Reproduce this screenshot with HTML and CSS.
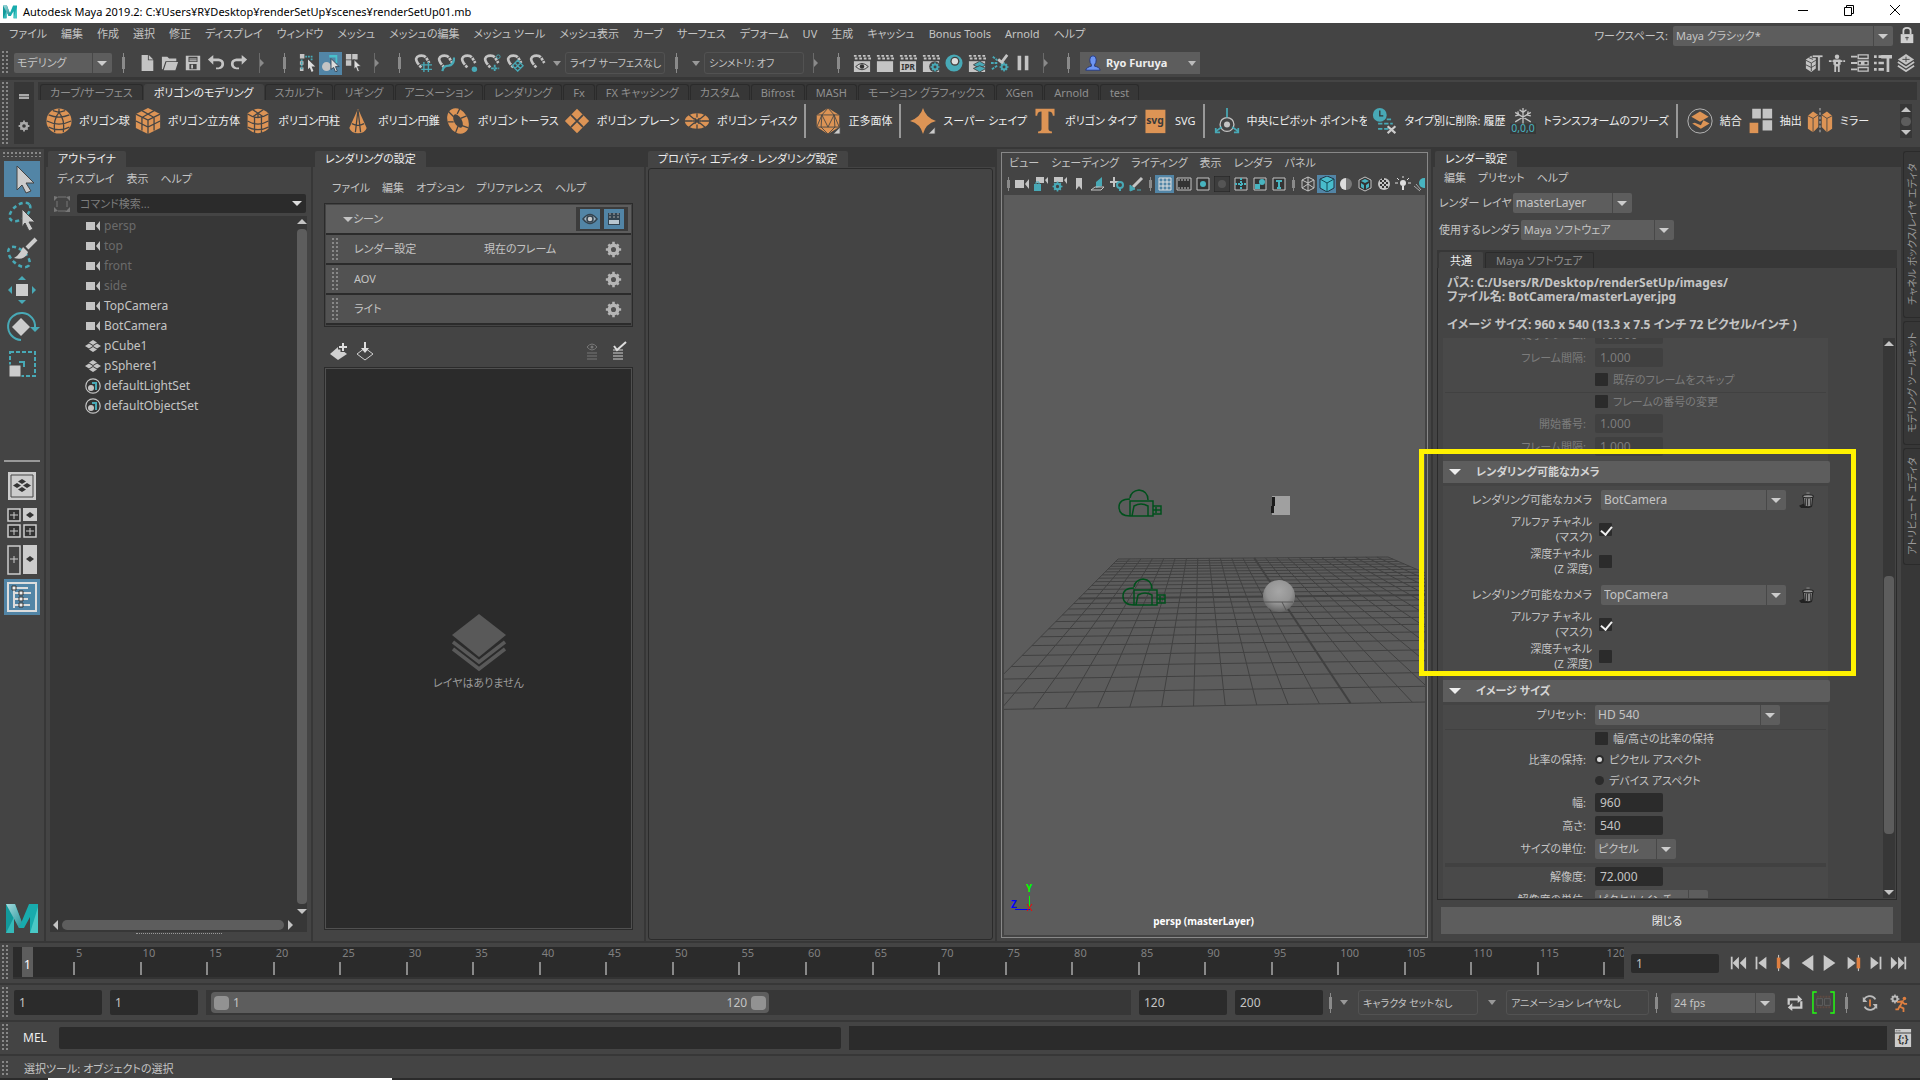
FILE: index.html
```html
<!DOCTYPE html>
<html lang="ja">
<head>
    <meta charset="utf-8" />
    <title>Autodesk Maya 2019.2</title>
    <link rel="stylesheet" href="styles.css">
</head>
<body>
    <!-- icon sprite -->
    <svg class="sprite" width="0" height="0">
        <defs>
            <linearGradient id="teal-a" x1="0" y1="0" x2="1" y2="1"><stop offset="0" stop-color="#a5dcdf"/><stop offset="1" stop-color="#1d8f95"/></linearGradient>
            <radialGradient id="ball" cx="50%" cy="35%" r="65%"><stop offset="0" stop-color="#a6a6a6"/><stop offset=".6" stop-color="#949494"/><stop offset="1" stop-color="#666"/></radialGradient>
        </defs>
        <symbol id="maya" viewBox="0 0 32 30">
            <path d="M0 0h9l9 24h-5L8 13v16H0z" fill="#12999b"/><path d="M0 0h9l9 24h-5z" fill="url(#teal-a)"/>
            <path d="M23 0h9v29h-8V13l-6 11h-5z" fill="#18abad"/><path d="M32 3v26h-8z" fill="#4ac8c6"/><path d="M0 29 8 13v16z" fill="#35b9b9"/>
        </symbol>
        <symbol id="new" viewBox="0 0 20 20"><path d="M4 1h7v6h6v12H4zM12 1l5 5h-5z" fill="#c4c4c4"/></symbol>
        <symbol id="open" viewBox="0 0 20 20"><path d="M1 3h6l2 2h8v3H5L2 17H1zM6 9h13l-3 9H3z" fill="#c4c4c4"/></symbol>
        <symbol id="save" viewBox="0 0 20 20"><path fill-rule="evenodd" d="M2 2h16v16H2zM5 3v6h10V3zM6 11v6h8v-6zM8 12h2v4H8zM6 5h8v1H6zM6 7h8v1H6z" fill="#c4c4c4"/></symbol>
        <symbol id="undo" viewBox="0 0 20 20"><path d="M7 1v4h6q6 1 6 6t-6 6h-3v-2h3q3-1 3-4t-3-3H7v4L1 6z" fill="#c4c4c4"/></symbol>
        <symbol id="redo" viewBox="0 0 20 20"><path d="M13 1v4H7q-6 1-6 6t6 6h3v-2H7q-3-1-3-4t3-3h6v4l6-6z" fill="#c4c4c4"/></symbol>
        <symbol id="sel-h" viewBox="0 0 20 20"><path d="M1 0h5v5H1zM1 8h4v4H1zM1 15h4v4H1z" fill="#c4c4c4"/><path d="M7 3h7v4M3 6v12" stroke="#48a9b6" stroke-width="2" stroke-dasharray="2 1" fill="none"/><path d="M10 6l8 8h-4l2 5-2 1-2-5-2 2z" fill="#ddd"/></symbol>
        <symbol id="sel-o" viewBox="0 0 20 20"><path d="M8 1h9v9h-2V4H8z" fill="#48c0cc"/><circle cx="5" cy="14" r="5" fill="#c4c4c4"/><path d="M10 5l9 9h-4l2 5-2 1-2-5-3 2z" fill="#ddd" stroke="#345"/></symbol>
        <symbol id="sel-c" viewBox="0 0 20 20"><path d="M1 0h6v6H1zM8 0h6v6H8zM1 7h6v6H1z" fill="#c4c4c4"/><path d="M10 6l8 8h-4l2 5-2 1-2-5-2 2z" fill="#ddd" stroke="#444"/></symbol>
        <symbol id="mag" viewBox="0 0 20 20"><path d="M8 15 4 10Q0 4 6 2q6-1 8 3l3 5" fill="none" stroke="#c4c4c4" stroke-width="3" stroke-dasharray="3 1 20 1"/></symbol>
        <symbol id="snap-g" viewBox="0 0 20 20"><use href="#mag"/><path d="M11 9v11M16 9v11M8 12h12M8 17h12" stroke="#48a9b6" stroke-width="1.500"/></symbol>
        <symbol id="snap-c" viewBox="0 0 20 20"><use href="#mag"/><path d="M6 19q1-6 7-6 6-1 6-9" stroke="#48a9b6" stroke-width="2.500" fill="none"/></symbol>
        <symbol id="snap-p" viewBox="0 0 20 20"><use href="#mag"/><circle cx="16" cy="17" r="3" fill="#48a9b6"/></symbol>
        <symbol id="snap-j" viewBox="0 0 20 20"><use href="#mag"/><path d="M13 12v8M9 16h9" stroke="#48a9b6" stroke-width="2" stroke-dasharray="3 1"/><circle cx="17" cy="3" r="2" fill="none" stroke="#48a9b6"/></symbol>
        <symbol id="snap-v" viewBox="0 0 20 20"><use href="#mag"/><path d="M13 7l6 6-6 6-6-6zM10 10l6 6M16 10l-6 6" stroke="#48a9b6" stroke-width="1.500" fill="none"/></symbol>
        <symbol id="clap" viewBox="0 0 20 20"><path d="M1 8h18v12H1z" fill="#c4c4c4"/><path d="M1 2h18M2 5h18" stroke="#c4c4c4" stroke-width="2" stroke-dasharray="3 2"/></symbol>
        <symbol id="clap-eye" viewBox="0 0 20 20"><use href="#clap"/><path d="M3 14q7-7 14 0-7 7-14 0z" fill="#ccc" stroke="#333"/><circle cx="10" cy="14" r="2.500" fill="#333"/></symbol>
        <symbol id="gear" viewBox="0 0 20 20"><circle cx="10" cy="10" r="5" fill="none" stroke="currentColor" stroke-width="4"/><path d="M10 1v3M10 16v3M1 10h3M16 10h3M4 4l2 2M14 14l2 2M16 4l-2 2M6 14l-2 2" stroke="currentColor" stroke-width="3"/></symbol>
        <symbol id="clap-set" viewBox="0 0 20 20"><use href="#clap"/><circle cx="14" cy="14" r="6" fill="#444"/><use href="#gear" x="9" y="9" width="11" height="11" color="#48a9b6"/></symbol>
        <symbol id="hyper" viewBox="0 0 20 20"><circle cx="10" cy="10" r="9.500" fill="#48a9b6"/><circle cx="11" cy="8" r="5" fill="#444"/><circle cx="11" cy="8" r="3.500" fill="#ddd"/></symbol>
        <symbol id="clap-lay" viewBox="0 0 20 20"><use href="#clap"/><path d="M13 8l7 4-7 4-7-4z" fill="#48a9b6" stroke="#444"/><path d="M13 13l7 3-7 4-7-4z" fill="#48a9b6" stroke="#444"/></symbol>
        <symbol id="light-ed" viewBox="0 0 20 20"><path d="M18 1l-6 8M8 6l6 5" stroke="#c4c4c4" stroke-width="3"/><path d="M0 10h7M1 17l6-4M2 3l5 4" stroke="#48a9b6" stroke-width="2" stroke-dasharray="3 1"/><use href="#gear" x="9" y="9" width="11" height="11" color="#48a9b6"/></symbol>
        <symbol id="pause" viewBox="0 0 20 20"><path d="M4 2h4v16H4zM12 2h4v16h-4z" fill="#c4c4c4"/></symbol>
        <symbol id="user" viewBox="0 0 20 20"><path d="M10 1q4 0 4 5 0 4-2 6v2q6 1 7 5H1q1-4 7-5v-2Q6 10 6 6q0-5 4-5z" fill="#6d95f2" stroke="#1b2f7a"/></symbol>
        <symbol id="lock" viewBox="0 0 20 20"><path d="M3 9h14v10H3z" fill="#d0d0d0"/><path d="M6 9V5q0-3 4-3t4 3v4" fill="none" stroke="#d0d0d0" stroke-width="2"/><path d="M10 12v4M8 13h4" stroke="#444"/></symbol>
        <symbol id="cube-ham" viewBox="0 0 20 20"><path d="M1 6l6-4 5 2v12l-5 4-6-4z" fill="#c4c4c4"/><path d="M1 7l6 3v9M7 10l5-3M1 12l6 3 5-3M4 4l5 2" stroke="#444" fill="none"/><path d="M8 1h12v3h-3v15h-3V4H8z" fill="#c4c4c4" stroke="#444"/></symbol>
        <symbol id="man" viewBox="0 0 20 20"><circle cx="10" cy="3" r="2.500" fill="#c4c4c4"/><path d="M1 8h18" stroke="#c4c4c4" stroke-width="2" stroke-dasharray="3 1" fill="none"/><path d="M6 6h8v6h-1v8h-2v-6H9v6H7v-8H6z" fill="#c4c4c4"/><path d="M9 9h2v2H9z" fill="#444"/></symbol>
        <symbol id="attr" viewBox="0 0 20 20"><path d="M0 3h7M0 10h7M0 17h7" stroke="#c4c4c4" stroke-width="2"/><path d="M8 1h11v4H8zM8 8h11v4H8zM8 15h11v4H8z" fill="none" stroke="#c4c4c4" stroke-width="1.500"/><path d="M11 8h4v4h-4z" fill="#c4c4c4"/></symbol>
        <symbol id="tools" viewBox="0 0 20 20"><path d="M0 3h3M5 3h4M0 10h3M5 10h6M0 17h3M5 17h6" stroke="#c4c4c4" stroke-width="3"/><path d="M8 1h12v4h-3v15h-3V5H8z" fill="#c4c4c4"/></symbol>
        <symbol id="layers" viewBox="0 0 20 20"><path d="M10 0l9 6-9 6-9-6z" fill="#c4c4c4"/><path d="M1 9l9 6 9-6M1 13l9 6 9-6" fill="none" stroke="#c4c4c4" stroke-width="2"/><path d="M6 6h8M10 3v6" stroke="#444"/></symbol>

        <symbol id="p-sphere" viewBox="0 0 30 30"><circle cx="15" cy="15" r="14.500" fill="#dd9455"/><path d="M3 8q12 5 24 0M1 15q14 7 28 0M3 22q12 6 24 0M15 1v4M15 5q-7 8-5 23M15 5q7 8 5 23M8 3l7 2 7-2" fill="none" stroke="#444" stroke-width="1.500"/></symbol>
        <symbol id="p-cube" viewBox="0 0 30 30"><path d="M15 0l14 7v16l-14 7-14-7V7z" fill="#dd9455"/><path d="M1 7l14 7 14-7M15 14v16M1 15l14 7 14-7M8 3l14 8v15M22 3L8 11v15" fill="none" stroke="#444" stroke-width="1.500"/></symbol>
        <symbol id="p-cyl" viewBox="0 0 30 30"><path d="M3 6q12-10 24 0v18q-12 10-24 0z" fill="#dd9455"/><path d="M3 7q12 8 24 0M3 15q12 7 24 0M11 10v19M19 10v19M15 6v5M9 2l12 8M21 2L9 10M3 22q12 6 24 0" fill="none" stroke="#444" stroke-width="1.500"/></symbol>
        <symbol id="p-cone" viewBox="0 0 30 30"><path d="M15 1l10 22q-2 6-10 6T5 23z" fill="#dd9455"/><path d="M15 2l-3 26M15 2l3 26M8 18q7 4 14 0" fill="none" stroke="#444" stroke-width="1.500"/></symbol>
        <symbol id="p-torus" viewBox="0 0 30 30"><ellipse cx="15" cy="15" rx="8" ry="12" transform="rotate(-28 15 15)" fill="none" stroke="#dd9455" stroke-width="7"/><path d="M4 4l6 6M3 16l7 0M12 29l3-8M19 20l8 3M18 12l7-3M14 7l3-6" stroke="#444" stroke-width="1.500"/></symbol>
        <symbol id="p-plane" viewBox="0 0 30 30"><path d="M15 1l14 14-14 14L1 15z" fill="#dd9455"/><path d="M8 8l14 14M22 8L8 22" stroke="#444" stroke-width="2"/></symbol>
        <symbol id="p-disc" viewBox="0 0 30 30"><ellipse cx="15" cy="15" rx="14" ry="9" fill="#dd9455"/><path d="M15 6v5M15 19v6M1 15h9M20 15h9M6 8l6 5M24 8l-6 5M6 22l6-5M24 22l-6-5" stroke="#444" stroke-width="1.500"/><path d="M10 15h10M12 12l6 6M18 12l-6 6" stroke="#444" stroke-width="2"/></symbol>
        <symbol id="p-plato" viewBox="0 0 30 30"><path d="M15 0l13 8v14l-13 8-13-8V8z" fill="#dd9455"/><path d="M2 8h26M2 22L8 8l7-8 7 8 6 14M8 8l-1 14h16L22 8M8 8l7 14 7-14M7 22l8 8 8-8M2 22h5M23 22h5" fill="none" stroke="#444"/><path d="M29 22v8h-8z" fill="#ccc" stroke="#444"/></symbol>
        <symbol id="p-super" viewBox="0 0 30 30"><path d="M15 0q3 11 15 15-12 3-15 15Q12 18 0 15 12 11 15 0z" fill="#dd9455"/><path d="M29 22v8h-8z" fill="#ccc" stroke="#444"/></symbol>
        <symbol id="p-type" viewBox="0 0 30 30"><path d="M4 1h22v8h-2q0-5-5-5v20q0 3 4 3v2H7v-2q4 0 4-3V4Q6 4 6 9H4z" fill="#dd9455"/></symbol>
        <symbol id="p-pivot" viewBox="0 0 30 30"><circle cx="15" cy="19" r="8" fill="none" stroke="#c4c4c4" stroke-width="1.500"/><circle cx="15" cy="19" r="3.500" fill="#c4c4c4"/><path d="M15 0v11M9 22l-7 5M21 22l7 5M2 23v5h5M28 23v5h-5" stroke="#48a9b6" stroke-width="2" fill="none"/></symbol>
        <symbol id="p-hist" viewBox="0 0 30 30"><circle cx="9" cy="8" r="8" fill="#48a9b6"/><path d="M9 3v6h4" stroke="#333" stroke-width="1.500" fill="none"/><path d="M17 13h7M7 18h17M7 24h12" stroke="#48a9b6" stroke-width="2" stroke-dasharray="5 2"/><path d="M18 21l9 8M27 21l-9 8" stroke="#ccc" stroke-width="2.500"/></symbol>
        <symbol id="p-comb" viewBox="0 0 30 30"><circle cx="15" cy="15" r="14" fill="none" stroke="#c4c4c4"/><path d="M15 4l10 6-10 6-10-6z" fill="#dd9455"/><path d="M19 14l7 4-10 6-10-6 3-1 7 3z" fill="#dd9455"/></symbol>
        <symbol id="p-extr" viewBox="0 0 30 30"><path d="M6 1h10v11H6zM18 1h11v11H18zM18 14h11v12H18z" fill="#c4c4c4"/><path d="M3 17h10v12H3z" fill="#dd9455"/></symbol>
        <symbol id="p-mirr" viewBox="0 0 30 30"><path d="M1 9l6-5 6 4v14l-6 6-6-4zM17 8l6-4 6 5v15l-6 4-6-6z" fill="#dd9455"/><path d="M1 9l6 3 6-4M7 12v16M17 8l6 4 6-3M23 12v16" stroke="#444" fill="none"/><path d="M15 0v30" stroke="#ccc" stroke-dasharray="3 2"/></symbol>

        <symbol id="t-arrow" viewBox="0 0 36 36"><path d="M13 5l17 17h-8l5 8-5 2-4-8-5 5z" fill="#ccc" stroke="#444"/></symbol>
        <symbol id="t-lasso" viewBox="0 0 36 36"><ellipse cx="16" cy="14" rx="12" ry="7" transform="rotate(-38 16 14)" fill="none" stroke="#48a9b6" stroke-width="2.500" stroke-dasharray="4 3"/><path d="M18 11l13 13h-6l4 7-4 2-4-8-3 4z" fill="#ccc" stroke="#444"/></symbol>
        <symbol id="t-paint" viewBox="0 0 36 36"><ellipse cx="15" cy="22" rx="13" ry="7" transform="rotate(42 15 22)" fill="none" stroke="#48a9b6" stroke-width="2.500" stroke-dasharray="4 3"/><path d="M32 4l-9 9" stroke="#ccc" stroke-width="4"/><path d="M19 12l5 5q-3 9-14 6 5-2 9-11z" fill="#ccc"/></symbol>
        <symbol id="t-move" viewBox="0 0 36 36"><path d="M12 12h12v12H12z" fill="#ccc"/><path d="M18 4l4 4h-8zM18 32l4-4h-8zM4 18l4-4v8zM32 18l-4-4v8z" fill="#48a9b6"/></symbol>
        <symbol id="t-rot" viewBox="0 0 36 36"><path d="M17 31A13.500 13.500 0 1 1 31 19" fill="none" stroke="#48a9b6" stroke-width="2"/><path d="M26 18h10l-5 5z" fill="#48a9b6"/><path d="M17 9l9 9-9 9-9-9z" fill="#ccc"/></symbol>
        <symbol id="t-scale" viewBox="0 0 36 36"><path d="M6 6h25v24H6z" fill="none" stroke="#48a9b6" stroke-width="2" stroke-dasharray="4 2"/><path d="M15 16h5v5" fill="none" stroke="#48a9b6" stroke-width="2"/><path d="M5 19h12v12H5z" fill="#ccc" stroke="#444"/></symbol>
        <symbol id="l-one" viewBox="0 0 36 36"><path d="M4 4h28v28H4z" fill="#ccc"/><path d="M7 7h22v22H7z" fill="none" stroke="#444"/><path d="M18 11l4 2.500-4 2.500-4-2.500zM18 19l4 2.500-4 2.500-4-2.500zM13 15l4 2.500-4 2.500-4-2.500zM23 15l4 2.500-4 2.500-4-2.500z" fill="#333"/></symbol>
        <symbol id="l-four" viewBox="0 0 36 36"><path d="M4 4h12v12H4zM4 20h12v12H4zM20 20h12v12H20z" fill="#333" stroke="#ccc" stroke-width="1.500"/><path d="M19 3h14v13H19z" fill="#ccc"/><path d="M10 7v7M6 10h8M10 23v7M6 26h8M26 23v7M22 26h8" stroke="#ccc"/><path d="M26 7l4 3-4 3-4-3z" fill="#333"/></symbol>
        <symbol id="l-two" viewBox="0 0 36 36"><path d="M4 4h12v28H4z" fill="#444" stroke="#ccc" stroke-width="1.500"/><path d="M19 3h14v29H19z" fill="#ccc"/><path d="M10 14v7M6 17h8" stroke="#ccc"/><path d="M26 14l4 3-4 3-4-3z" fill="#333"/></symbol>
        <symbol id="l-out" viewBox="0 0 36 36"><path d="M4 4h28v28H4z" fill="none" stroke="#ddd" stroke-width="2"/><path d="M10 9v20M10 9h14M10 14h17M10 20h14M10 26h16" stroke="#ddd" stroke-width="2"/><path d="M8 7h4v4H8zM15 12h4v4h-4zM15 18h4v4h-4zM15 24h4v4h-4z" fill="#eee" stroke="#333"/></symbol>

        <symbol id="cam" viewBox="0 0 16 16"><path d="M1 4h9v8H1zM11 8l4-5v10z" fill="#c4c4c4"/></symbol>
        <symbol id="mesh" viewBox="0 0 16 16"><path d="M8 2l4 2.500L8 7 4 4.500zM8 9l4 2.500L8 14l-4-2.500zM4 5.500L8 8l-4 2.500L0 8zM12 5.500L16 8l-4 2.500L8 8z" fill="#c4c4c4"/></symbol>
        <symbol id="set" viewBox="0 0 16 16"><circle cx="8" cy="8" r="7.200" fill="#333" stroke="#c4c4c4" stroke-width="1.200"/><path d="M7 4h5v8h-2V6H7z" fill="#48a9b6"/><circle cx="6" cy="10" r="3" fill="#c4c4c4"/></symbol>
        <symbol id="frame" viewBox="0 0 16 16"><path d="M4 1h8M4 15h8M3 5v6M13 5v6" stroke="#777"/><path d="M0 0l4 1-4 4zM16 0v5l-4-4zM0 16v-5l4 4zM16 16h-5l5-5z" fill="#777"/></symbol>
        <symbol id="eye" viewBox="0 0 20 20"><path d="M3 10q7-9 14 0-7 9-14 0z" fill="#9fb4c2" stroke="#33434f" stroke-width="1.500"/><circle cx="10" cy="10" r="3" fill="#ccc" stroke="#33434f" stroke-width="1.500"/></symbol>
        <symbol id="clap-b" viewBox="0 0 20 20"><path d="M4 4h12v12H4z" fill="#33434f"/><path d="M5 5h11M5 8h11" stroke="#aaa" stroke-dasharray="2 2"/><path d="M5 11h10v4H5z" fill="#b8c6cf"/></symbol>
        <symbol id="lay-add" viewBox="0 0 20 20"><path d="M9 6l9 7-9 6-8-6z" fill="#d0d0d0"/><path d="M14 1v10M9 6h10" stroke="#444" stroke-width="5"/><path d="M14 2v8M10 6h8" stroke="#ddd" stroke-width="2"/></symbol>
        <symbol id="lay-imp" viewBox="0 0 20 20"><path d="M10 7l8 6-8 6-8-6z" fill="none" stroke="#d0d0d0"/><path d="M10 1v7" stroke="#ddd" stroke-width="2"/><path d="M6 7h8l-4 5z" fill="#ddd"/></symbol>
        <symbol id="lst-eye" viewBox="0 0 20 20"><path d="M5 6q5-6 10 0-5 6-10 0zM5 12h10M5 15h10M5 18h10" fill="none" stroke="#777"/><circle cx="10" cy="6" r="1.500" fill="#777"/></symbol>
        <symbol id="lst-chk" viewBox="0 0 20 20"><path d="M5 9h10M5 12h10M5 15h10M5 18h10" stroke="#d0d0d0"/><path d="M6 5l3 4 9-8" fill="none" stroke="#ddd" stroke-width="2"/></symbol>
        <symbol id="stack" viewBox="0 0 54 58"><path d="M27 0l27 21-27 22L0 21z" fill="#595959"/><path d="M1 28l26 20 26-20M1 35l26 20 26-20" fill="none" stroke="#595959" stroke-width="3.500"/></symbol>

        <symbol id="v-lock" viewBox="0 0 16 16"><path d="M3 1h8v6H3zM12 4l3-3v7z" fill="#c4c4c4"/><path d="M1 8h7v7H1z" fill="#48a9b6"/><path d="M3 8V6h3v2" fill="none" stroke="#48a9b6"/></symbol>
        <symbol id="v-camset" viewBox="0 0 16 16"><path d="M2 1h9v5H2zM12 4l3-3v7z" fill="#c4c4c4"/><use href="#gear" x="0" y="5" width="11" height="11" color="#48a9b6"/></symbol>
        <symbol id="v-mark" viewBox="0 0 16 16"><path d="M5 2h6v12l-3-4-3 4z" fill="#c4c4c4"/></symbol>
        <symbol id="v-img" viewBox="0 0 16 16"><path d="M6 12V6l6-5v9z" fill="#48a9b6"/><path d="M1 14l4-3h9l-3 3z" fill="none" stroke="#c4c4c4"/></symbol>
        <symbol id="v-pan" viewBox="0 0 16 16"><path d="M5 1v10M1 6h9" stroke="#c4c4c4" stroke-width="2"/><circle cx="11" cy="9" r="3" fill="none" stroke="#48a9b6" stroke-width="2"/><path d="M11 12v3" stroke="#48a9b6" stroke-width="2"/></symbol>
        <symbol id="v-pen" viewBox="0 0 16 16"><path d="M14 2L5 11" stroke="#c4c4c4" stroke-width="3"/><path d="M2 9l5 4-5 2zM9 14h4" stroke="#48a9b6" fill="#48a9b6"/></symbol>
        <symbol id="v-grid" viewBox="0 0 16 16"><path d="M2 2h12v12H2zM6 2v12M10 2v12M2 6h12M2 10h12" fill="none" stroke="#e0e0e0"/></symbol>
        <symbol id="v-film" viewBox="0 0 16 16"><path d="M1 2h14v12H1z" fill="#333" stroke="#c4c4c4"/><path d="M2 4h12M2 12h12" stroke="#c4c4c4" stroke-dasharray="2 1"/></symbol>
        <symbol id="v-res" viewBox="0 0 16 16"><path d="M2 2h12v12H2z" fill="#333" stroke="#c4c4c4"/><circle cx="8" cy="8" r="3" fill="#48b4c0"/></symbol>
        <symbol id="v-gate" viewBox="0 0 16 16"><path d="M0 0h16v16H0z" fill="#3d3d3d" stroke="#222"/><circle cx="8" cy="8" r="4" fill="#555"/></symbol>
        <symbol id="v-chart" viewBox="0 0 16 16"><path d="M2 2h12v12H2z" fill="#333" stroke="#c4c4c4"/><path d="M8 2v12M2 8h12" stroke="#48b4c0" stroke-width="2" stroke-dasharray="2 1"/></symbol>
        <symbol id="v-safe" viewBox="0 0 16 16"><path d="M2 2h12v12H2z" fill="#333" stroke="#c4c4c4"/><path d="M3 8h5v5H3z" fill="#48b4c0"/><circle cx="10" cy="6" r="3" fill="#48b4c0"/></symbol>
        <symbol id="v-title" viewBox="0 0 16 16"><path d="M2 2h12v12H2z" fill="#333" stroke="#c4c4c4"/><path d="M5 5h6M8 5v7M6 12h4" stroke="#48b4c0" stroke-width="2"/></symbol>
        <symbol id="v-wire" viewBox="0 0 16 16"><path d="M8 1l6 3v8l-6 3-6-3V4zM2 4l6 3 6-3M8 7v8M2 12l6-4 6 4M8 1v6" fill="none" stroke="#c4c4c4"/></symbol>
        <symbol id="v-shade" viewBox="0 0 16 16"><path d="M8 0l7 3v9l-7 4-7-4V3z" fill="#48bccb" stroke="#234"/><path d="M1 3l7 4 7-4M8 7v9" fill="none" stroke="#134b55" /></symbol>
        <symbol id="v-half" viewBox="0 0 16 16"><circle cx="8" cy="8" r="6" fill="#777"/><path d="M8 2a6 6 0 0 0 0 12z" fill="#ddd"/></symbol>
        <symbol id="v-tex" viewBox="0 0 16 16"><path d="M8 1l6 3v8l-6 3-6-3V4z" fill="#333" stroke="#c4c4c4"/><path d="M8 3l4 2-4 2-4-2zM4 7l3 2v4l-3-2zM12 7L9 9v4l3-2z" fill="#48b4c0"/></symbol>
        <symbol id="v-chk" viewBox="0 0 16 16"><circle cx="8" cy="8" r="6" fill="#c4c4c4"/><path d="M4 4h2v2H4zM8 4h2v2H8zM6 6h2v2H6zM10 6h2v2h-2zM4 8h2v2H4zM8 8h2v2H8zM6 10h2v2H6zM10 10h2v2h-2zM6 2h2v2H6z" fill="#333"/></symbol>
        <symbol id="v-bulb" viewBox="0 0 16 16"><circle cx="8" cy="7" r="3" fill="#ddd"/><path d="M7 10h2v4H7z" fill="#ddd"/><path d="M8 0v2M0 7h3M13 7h3M2 2l2 2M14 2l-2 2" stroke="#ddd"/></symbol>
        <symbol id="v-shad" viewBox="0 0 16 16"><path d="M0 10l6 5M2 8l5 6" stroke="#aaa"/><circle cx="10" cy="7" r="5" fill="#48b4c0"/></symbol>

        <symbol id="start" viewBox="0 0 20 20"><path d="M3 3v14" stroke="#c8c8c8" stroke-width="2"/><path d="M11 3v14l-7-7zM19 3v14l-7-7z" fill="#c8c8c8"/></symbol>
        <symbol id="stepb" viewBox="0 0 20 20"><path d="M5 3v14" stroke="#c8c8c8" stroke-width="2"/><path d="M16 3v14l-9-7z" fill="#c8c8c8"/></symbol>
        <symbol id="keyb" viewBox="0 0 20 20"><path d="M4 1v18" stroke="#ddd"/><path d="M4 4v12" stroke="#df7f40" stroke-width="4"/><path d="M16 3v14l-9-7z" fill="#c8c8c8"/></symbol>
        <symbol id="playb" viewBox="0 0 20 20"><path d="M17 1v18L4 10z" fill="#c8c8c8"/></symbol>
        <symbol id="trash" viewBox="0 0 16 16"><path d="M0 13l4-2h8v3l-3 1H2z" fill="#222"/><path d="M4 4h9l-1 9q-3 2-7 0z" fill="#8a8a8a" stroke="#222"/><path d="M6 6v7M8 6v7M11 6v7" stroke="#333"/><ellipse cx="8.500" cy="4" rx="5" ry="1.500" fill="#999" stroke="#222"/><path d="M7 1h3" stroke="#888"/></symbol>
        <symbol id="loop" viewBox="0 0 20 20"><path d="M3 12V6h11M17 8v7H6" fill="none" stroke="#ccc" stroke-width="2.500"/><path d="M13 1v9l5-4zM7 10v9l-5-4z" fill="#ccc"/></symbol>
        <symbol id="cache" viewBox="0 0 24 24"><path d="M5 1H1v22h4M19 1h4v22h-4" fill="none" stroke="#2f1" stroke-width="1.500"/><path d="M5 6h14M5 17h14" stroke="#5e4a42" stroke-width="2" stroke-dasharray="2 1"/><path d="M5 8h6v7H5zM13 8h6v7h-6z" fill="none" stroke="#5e5e5e"/></symbol>
        <symbol id="autokey" viewBox="0 0 20 20"><path d="M3 8a7 7 0 0 1 13-2M17 12a7 7 0 0 1-13 2" fill="none" stroke="#bbb" stroke-width="2"/><path d="M2 3v6h5zM18 17v-6h-5z" fill="#bbb"/><path d="M10 6v8" stroke="#df7f40" stroke-width="2"/></symbol>
        <symbol id="runner" viewBox="0 0 20 20"><use href="#gear" width="11" height="11" color="#bbb"/><circle cx="16" cy="5" r="2" fill="#df7f40"/><path d="M8 9l6-1-3 6 4 2v4M11 13l-2 4H6M14 9l2 2h3" fill="none" stroke="#df7f40" stroke-width="2"/></symbol>
        <symbol id="script" viewBox="0 0 20 20"><path d="M1 0h18v4H1zM1 5h18v15H1z" fill="#ccc"/><path d="M2 2h6" stroke="#333" stroke-dasharray="1 1"/></symbol>
    </svg>

    <header class="titlebar">
        <svg class="app-icon"><use href="#maya"/></svg>
        <h1>Autodesk Maya 2019.2: C:¥Users¥R¥Desktop¥renderSetUp¥scenes¥renderSetUp01.mb</h1>
        <div class="win-buttons">
            <button aria-label="最小化"><svg viewBox="0 0 12 12"><path d="M1 6.500h10" stroke="#000"/></svg></button>
            <button aria-label="元に戻す"><svg viewBox="0 0 12 12"><path d="M1.500 3.500h7v8h-7zM3.500 3V1.500h7v8H9" fill="none" stroke="#000"/></svg></button>
            <button aria-label="閉じる"><svg viewBox="0 0 12 12"><path d="M1 1l10 10M11 1L1 11" stroke="#000"/></svg></button>
        </div>
    </header>

    <div class="menubar">
        <nav class="menu">
            <button>ファイル</button><button>編集</button><button>作成</button><button>選択</button><button>修正</button><button>ディスプレイ</button><button>ウィンドウ</button><button>メッシュ</button><button>メッシュの編集</button><button>メッシュ ツール</button><button>メッシュ表示</button><button>カーブ</button><button>サーフェス</button><button>デフォーム</button><button>UV</button><button>生成</button><button>キャッシュ</button><button>Bonus Tools</button><button>Arnold</button><button>ヘルプ</button>
        </nav>
        <label class="workspace">ワークスペース:
            <span class="select w-workspace"><select><option>Maya クラシック*</option></select></span>
        </label>
        <button class="tool"><svg><use href="#lock"/></svg></button>
    </div>

    <div class="status">
        <i class="grip"></i>
        <span class="select w-mode"><select aria-label="メニュー セット"><option>モデリング</option></select></span>
        <i class="sep"></i>
        <button class="tool"><svg><use href="#new"/></svg></button>
        <button class="tool"><svg><use href="#open"/></svg></button>
        <button class="tool"><svg><use href="#save"/></svg></button>
        <button class="tool"><svg><use href="#undo"/></svg></button>
        <button class="tool"><svg><use href="#redo"/></svg></button>
        <i class="chev"></i><i class="sep"></i>
        <button class="tool"><svg><use href="#sel-h"/></svg></button>
        <button class="tool on"><svg><use href="#sel-o"/></svg></button>
        <button class="tool"><svg><use href="#sel-c"/></svg></button>
        <i class="chev"></i><i class="sep"></i>
        <button class="tool"><svg><use href="#snap-g"/></svg></button>
        <button class="tool"><svg><use href="#snap-c"/></svg></button>
        <button class="tool"><svg><use href="#snap-p"/></svg></button>
        <button class="tool"><svg><use href="#snap-j"/></svg></button>
        <button class="tool"><svg><use href="#snap-v"/></svg></button>
        <button class="tool"><svg><use href="#mag"/></svg></button>
        <i class="tri"></i>
        <button class="readout">ライブ サーフェスなし</button>
        <i class="sep"></i><i class="tri"></i>
        <button class="readout">シンメトリ: オフ</button>
        <i class="chev"></i><i class="sep"></i>
        <button class="tool"><svg><use href="#clap-eye"/></svg></button>
        <button class="tool"><svg><use href="#clap"/></svg></button>
        <button class="tool"><svg viewBox="0 0 20 20"><use href="#clap"/><text x="10" y="18" text-anchor="middle" font-size="9" font-weight="bold" fill="#333">IPR</text></svg></button>
        <button class="tool"><svg><use href="#clap-set"/></svg></button>
        <button class="tool"><svg><use href="#hyper"/></svg></button>
        <button class="tool"><svg><use href="#clap-lay"/></svg></button>
        <button class="tool"><svg><use href="#light-ed"/></svg></button>
        <button class="tool"><svg><use href="#pause"/></svg></button>
        <i class="chev"></i><i class="sep"></i>
        <button class="user"><svg><use href="#user"/></svg>Ryo Furuya<i class="tri"></i></button>
        <div class="status-right">
            <button class="tool"><svg><use href="#cube-ham"/></svg></button>
            <button class="tool"><svg><use href="#man"/></svg></button>
            <button class="tool"><svg><use href="#attr"/></svg></button>
            <button class="tool"><svg><use href="#tools"/></svg></button>
            <button class="tool"><svg><use href="#layers"/></svg></button>
        </div>
    </div>

    <div class="shelf">
        <i class="grip"></i>
        <div class="shelf-side"><i class="bars"></i><svg><use href="#gear"/></svg></div>
        <div class="shelf-main">
            <div class="shelf-tabs">
                <button>カーブ/サーフェス</button><button class="active">ポリゴンのモデリング</button><button>スカルプト</button><button>リギング</button><button>アニメーション</button><button>レンダリング</button><button>Fx</button><button>FX キャッシング</button><button>カスタム</button><button>Bifrost</button><button>MASH</button><button>モーション グラフィックス</button><button>XGen</button><button>Arnold</button><button>test</button>
            </div>
            <div class="shelf-items">
                <button><svg><use href="#p-sphere"/></svg>ポリゴン球</button>
                <button><svg><use href="#p-cube"/></svg>ポリゴン立方体</button>
                <button><svg><use href="#p-cyl"/></svg>ポリゴン円柱</button>
                <button><svg><use href="#p-cone"/></svg>ポリゴン円錐</button>
                <button><svg><use href="#p-torus"/></svg>ポリゴン トーラス</button>
                <button><svg><use href="#p-plane"/></svg>ポリゴン プレーン</button>
                <button><svg><use href="#p-disc"/></svg>ポリゴン ディスク</button>
                <i class="bar"></i>
                <button><svg><use href="#p-plato"/></svg>正多面体</button>
                <i class="bar"></i>
                <button><svg><use href="#p-super"/></svg>スーパー シェイプ</button>
                <button><svg><use href="#p-type"/></svg>ポリゴン タイプ</button>
                <button><svg viewBox="0 0 30 30"><path d="M4 2h23v27H4z" fill="#dd9455"/><text x="15" y="19" text-anchor="middle" font-size="12" font-weight="bold" fill="#3a3a3a">svg</text></svg>SVG</button>
                <i class="bar"></i>
                <button class="long"><svg><use href="#p-pivot"/></svg><span>中央にピボット ポイントを移動</span></button>
                <button><svg><use href="#p-hist"/></svg>タイプ別に削除: 履歴</button>
                <button><svg viewBox="0 0 30 30"><path d="M15 0v19M6 5l18 11M24 5L6 16M11 2l4 3 4-3M6 9l4-1-1-4M24 9l-4-1 1-4" stroke="#c4c4c4" stroke-width="1.500" fill="none"/><path d="M0 18h30v12H0z" fill="#383838"/><text x="15" y="28" text-anchor="middle" font-size="12" fill="#48b4c0">0,0,0</text></svg>トランスフォームのフリーズ</button>
                <i class="bar"></i>
                <button><svg><use href="#p-comb"/></svg>結合</button>
                <button><svg><use href="#p-extr"/></svg>抽出</button>
                <button><svg><use href="#p-mirr"/></svg>ミラー</button>
                <div class="shelf-scroll"><i class="up"></i><i class="dot"></i><i class="down"></i></div>
            </div>
        </div>
    </div>

    <main class="workarea">
        <aside class="toolbox">
            <i class="hgrip"></i>
            <button class="on"><svg><use href="#t-arrow"/></svg></button>
            <button><svg><use href="#t-lasso"/></svg></button>
            <button><svg><use href="#t-paint"/></svg></button>
            <button><svg><use href="#t-move"/></svg></button>
            <button><svg><use href="#t-rot"/></svg></button>
            <button><svg><use href="#t-scale"/></svg></button>
            <div class="layouts">
                <button><svg><use href="#l-one"/></svg></button>
                <button><svg><use href="#l-four"/></svg></button>
                <button><svg><use href="#l-two"/></svg></button>
                <button class="on"><svg><use href="#l-out"/></svg></button>
            </div>
            <svg class="logo"><use href="#maya"/></svg>
        </aside>

        <section class="panel outliner">
            <div class="tabbar"><h2 class="tab">アウトライナ</h2></div>
            <nav class="menu"><button>ディスプレイ</button><button>表示</button><button>ヘルプ</button></nav>
            <div class="search"><svg><use href="#frame"/></svg><span class="searchbox"><input type="text" aria-label="コマンド検索" placeholder="コマンド検索..."></span></div>
            <div class="tree">
                <ul>
                    <li class="dim"><svg><use href="#cam"/></svg>persp</li>
                    <li class="dim"><svg><use href="#cam"/></svg>top</li>
                    <li class="dim"><svg><use href="#cam"/></svg>front</li>
                    <li class="dim"><svg><use href="#cam"/></svg>side</li>
                    <li><svg><use href="#cam"/></svg>TopCamera</li>
                    <li><svg><use href="#cam"/></svg>BotCamera</li>
                    <li><svg><use href="#mesh"/></svg>pCube1</li>
                    <li><svg><use href="#mesh"/></svg>pSphere1</li>
                    <li><svg><use href="#set"/></svg>defaultLightSet</li>
                    <li><svg><use href="#set"/></svg>defaultObjectSet</li>
                </ul>
                <div class="vscroll"><i class="up"></i><b></b><i class="down"></i></div>
            </div>
            <div class="hscroll"><i class="left"></i><b></b><i class="right"></i></div>
            <i class="hdots"></i>
        </section>

        <section class="panel rsetup">
            <div class="tabbar"><h2 class="tab">レンダリングの設定</h2></div>
            <nav class="menu"><button>ファイル</button><button>編集</button><button>オプション</button><button>プリファレンス</button><button>ヘルプ</button></nav>
            <div class="scene">
                <div class="scene-head"><i class="down"></i><span>シーン</span>
                    <div class="toggles"><button><svg><use href="#eye"/></svg></button><button><svg><use href="#clap-b"/></svg></button></div>
                </div>
                <div class="scene-row"><i class="grip"></i><span class="name">レンダー設定</span><span>現在のフレーム</span><button><svg><use href="#gear"/></svg></button></div>
                <div class="scene-row"><i class="grip"></i><span class="name">AOV</span><button><svg><use href="#gear"/></svg></button></div>
                <div class="scene-row"><i class="grip"></i><span class="name">ライト</span><button><svg><use href="#gear"/></svg></button></div>
            </div>
            <div class="layer-tools">
                <button><svg><use href="#lay-add"/></svg></button>
                <button><svg><use href="#lay-imp"/></svg></button>
                <button class="push"><svg><use href="#lst-eye"/></svg></button>
                <button><svg><use href="#lst-chk"/></svg></button>
            </div>
            <div class="layer-list"><svg><use href="#stack"/></svg><p>レイヤはありません</p></div>
        </section>

        <section class="panel props">
            <div class="tabbar"><h2 class="tab">プロパティ エディタ - レンダリング設定</h2></div>
            <div class="props-body"></div>
        </section>

        <section class="panel viewport">
            <div class="view-frame">
                <nav class="menu"><button>ビュー</button><button>シェーディング</button><button>ライティング</button><button>表示</button><button>レンダラ</button><button>パネル</button></nav>
                <div class="view-tools">
                    <i class="sep"></i>
                    <button><svg><use href="#cam"/></svg></button><button><svg><use href="#v-lock"/></svg></button><button><svg><use href="#v-camset"/></svg></button><button><svg><use href="#v-mark"/></svg></button><button><svg><use href="#v-img"/></svg></button><button><svg><use href="#v-pan"/></svg></button><button><svg><use href="#v-pen"/></svg></button>
                    <i class="sep"></i>
                    <button class="on"><svg><use href="#v-grid"/></svg></button><button><svg><use href="#v-film"/></svg></button><button><svg><use href="#v-res"/></svg></button><button><svg><use href="#v-gate"/></svg></button><button><svg><use href="#v-chart"/></svg></button><button><svg><use href="#v-safe"/></svg></button><button><svg><use href="#v-title"/></svg></button>
                    <i class="sep"></i>
                    <button><svg><use href="#v-wire"/></svg></button><button class="on"><svg><use href="#v-shade"/></svg></button><button><svg><use href="#v-half"/></svg></button><button><svg><use href="#v-tex"/></svg></button><button><svg><use href="#v-chk"/></svg></button><button><svg><use href="#v-bulb"/></svg></button><button><svg><use href="#v-shad"/></svg></button>
                </div>
                <div class="canvas">
                    <svg class="scene3d" width="100%" height="100%">
                        <g id="grid" stroke="#414141" fill="none"></g>
                        <!-- cube -->
                        <path d="M268 301h18v19h-18z" fill="#a0a0a0"/><path d="M268 302h3v9h-1v7h-3v-7h1z" fill="#1b1b1b"/>
                        <!-- sphere -->
                        <circle cx="275" cy="401" r="16" fill="url(#ball)"/>
                        <path d="M259 407h30M278 407l4 8" stroke="#555"/>
                        <!-- cameras -->
                        <g id="camera" fill="none" stroke="#00501c" stroke-width="1.500">
                            <path d="M126 306h23v15h-23zM126 321q-11 0-11-9 0-8 11-8M126 303q1-7 9-8 9 1 9 10M128 321l2-10q7-4 14 0v10h-15M149 311h8v8h-8zM152 312v6M149 315h8"/>
                        </g>
                        <use href="#camera" x="4" y="89"/>
                        <!-- axis -->
                        <path d="M25.500 701v14" stroke="#0f0"/><path d="M11 714.500h15" stroke="#00f"/><path d="M23 709l5 7M28 709l-5 7" stroke="#f00"/>
                        <text x="22" y="697" fill="#0f0" font-size="10" font-weight="bold">Y</text>
                        <text x="7" y="713" fill="#00f" font-size="10" font-weight="bold">Z</text>
                    </svg>
                    <p class="cam-name">persp (masterLayer)</p>
                </div>
            </div>
        </section>

        <section class="panel rsettings">
            <div class="tabbar"><h2 class="tab">レンダー設定</h2></div>
            <nav class="menu"><button>編集</button><button>プリセット</button><button>ヘルプ</button></nav>
            <label class="pick">レンダー レイヤ <span class="select w-layer latin"><select><option>masterLayer</option></select></span></label>
            <label class="pick">使用するレンダラ <span class="select w-renderer"><select><option>Maya ソフトウェア</option></select></span></label>
            <div class="tabs2"><button class="active">共通</button><button>Maya ソフトウェア</button></div>
            <div class="settings-body">
                <p class="info">パス: C:/Users/R/Desktop/renderSetUp/images/<br>ファイル名: BotCamera/masterLayer.jpg<br><br>イメージ サイズ: 960 x 540 (13.3 x 7.5 インチ 72 ピクセル/インチ )</p>
                <div class="scroller">
                    <div class="form">
                        <div class="group off first">
                            <div class="row"><label for="f-end">終了フレーム:</label><input id="f-end" type="text" value="10.000" disabled></div>
                            <div class="row"><label for="f-by">フレーム間隔:</label><input id="f-by" type="text" value="1.000" disabled></div>
                            <div class="row check"><span></span><input id="f-skip" type="checkbox" disabled><label for="f-skip">既存のフレームをスキップ</label></div>
                            <hr>
                            <div class="row check"><span></span><input id="f-ren" type="checkbox" disabled><label for="f-ren">フレームの番号の変更</label></div>
                            <div class="row"><label for="f-start">開始番号:</label><input id="f-start" type="text" value="1.000" disabled></div>
                            <div class="row"><label for="f-by2">フレーム間隔:</label><input id="f-by2" type="text" value="1.000" disabled></div>
                        </div>
                        <h3><i class="down"></i>レンダリング可能なカメラ</h3>
                        <div class="group cams">
                            <div class="row"><label for="cam1">レンダリング可能なカメラ</label><span class="select w-cam latin"><select id="cam1"><option>BotCamera</option></select></span><button class="trash"><svg><use href="#trash"/></svg></button></div>
                            <div class="row two"><label for="a1">アルファ チャネル<br>(マスク)</label><input id="a1" type="checkbox" checked></div>
                            <div class="row two"><label for="z1">深度チャネル<br>(Z 深度)</label><input id="z1" type="checkbox"></div>
                        </div>
                        <div class="group cams">
                            <div class="row"><label for="cam2">レンダリング可能なカメラ</label><span class="select w-cam latin"><select id="cam2"><option>TopCamera</option></select></span><button class="trash"><svg><use href="#trash"/></svg></button></div>
                            <div class="row two"><label for="a2">アルファ チャネル<br>(マスク)</label><input id="a2" type="checkbox" checked></div>
                            <div class="row two"><label for="z2">深度チャネル<br>(Z 深度)</label><input id="z2" type="checkbox"></div>
                        </div>
                        <h3><i class="down"></i>イメージ サイズ</h3>
                        <div class="group">
                            <div class="row"><label for="preset">プリセット:</label><span class="select w-cam latin"><select id="preset"><option>HD 540</option></select></span></div>
                            <hr>
                            <div class="row check"><span></span><input id="keep" type="checkbox"><label for="keep">幅/高さの比率の保持</label></div>
                            <div class="row check"><span>比率の保持:</span><input id="r1" type="radio" name="ratio" checked><label for="r1">ピクセル アスペクト</label></div>
                            <div class="row check"><span></span><input id="r2" type="radio" name="ratio"><label for="r2">デバイス アスペクト</label></div>
                            <div class="row"><label for="wd">幅:</label><input id="wd" type="text" value="960"></div>
                            <div class="row"><label for="ht">高さ:</label><input id="ht" type="text" value="540"></div>
                            <div class="row"><label for="unit">サイズの単位:</label><span class="select w-unit"><select id="unit"><option>ピクセル</option></select></span></div>
                            <hr class="thick">
                            <div class="row"><label for="dpi">解像度:</label><input id="dpi" type="text" value="72.000"></div>
                            <div class="row"><label for="dpiu">解像度の単位:</label><span class="select w-dpi"><select id="dpiu"><option>ピクセル/インチ</option></select></span></div>
                        </div>
                    </div>
                    <div class="vscroll low"><i class="up"></i><b></b><i class="down"></i></div>
                </div>
            </div>
            <button class="close">閉じる</button>
            <div class="marker"></div>
        </section>

        <aside class="sidetabs">
            <button class="s1">チャネル ボックス/レイヤ エディタ</button>
            <button class="s2">モデリング ツールキット</button>
            <button class="s3">アトリビュート エディタ</button>
        </aside>
    </main>

    <div class="timeline">
        <i class="grip"></i>
        <div class="ticks" id="ticks"><b class="current">1</b></div>
        <input type="text" aria-label="現在のフレーム" value="1">
        <div class="playback">
            <button class="tool"><svg><use href="#start"/></svg></button>
            <button class="tool"><svg><use href="#stepb"/></svg></button>
            <button class="tool"><svg><use href="#keyb"/></svg></button>
            <button class="tool"><svg><use href="#playb"/></svg></button>
            <button class="tool flip"><svg><use href="#playb"/></svg></button>
            <button class="tool flip"><svg><use href="#keyb"/></svg></button>
            <button class="tool flip"><svg><use href="#stepb"/></svg></button>
            <button class="tool flip"><svg><use href="#start"/></svg></button>
        </div>
    </div>

    <div class="range">
        <i class="grip"></i>
        <input type="text" aria-label="アニメーション開始" value="1">
        <input type="text" aria-label="再生開始" value="1">
        <div class="track"><div class="thumb"><b></b>1<span>120</span><b></b></div></div>
        <input type="text" aria-label="再生終了" value="120">
        <input type="text" aria-label="アニメーション終了" value="200">
        <i class="sep"></i><i class="tri"></i>
        <button class="readout">キャラクタ セットなし</button>
        <i class="tri"></i>
        <button class="readout wide">アニメーション レイヤなし</button>
        <i class="sep"></i>
        <span class="select w-fps"><select aria-label="フレーム レート"><option>24 fps</option></select></span>
        <div class="range-tools">
            <button class="tool"><svg><use href="#loop"/></svg></button>
            <button class="tool big"><svg><use href="#cache"/></svg></button>
            <i class="sep"></i>
            <button class="tool"><svg><use href="#autokey"/></svg></button>
            <button class="tool"><svg><use href="#runner"/></svg></button>
        </div>
    </div>

    <div class="command">
        <i class="grip"></i>
        <label for="mel">MEL</label>
        <input id="mel" type="text">
        <i class="splitter"></i>
        <output></output>
        <button class="tool"><svg viewBox="0 0 20 20"><use href="#script"/><text x="10" y="16" text-anchor="middle" font-size="11" font-weight="bold" fill="#333">{;}</text></svg></button>
    </div>

    <footer class="helpline"><i class="grip"></i>選択ツール: オブジェクトの選択</footer>
    <div class="taskbar"><b></b></div>

    <script src="app.js"></script>
</body>
</html>
```
FILE: styles.css
```css
* { box-sizing: border-box; }

body {
    display: flex;
    flex-direction: column;
    height: 100vh;
    margin: 0;
    overflow: hidden;
    background: #444;
    color: #c4c4c4;
    font-family: "Noto Sans", "Noto Sans CJK JP", sans-serif;
    font-size: 11px;
    line-height: 16px;
    font-feature-settings: "palt";
}

button, input, select {
    font: inherit;
    color: inherit;
    font-feature-settings: inherit;
}

button {
    padding: 0;
    border: 0;
    background: none;
    white-space: nowrap;
}

h1, h2, h3, p, ul { margin: 0; padding: 0; font-size: 11px; font-weight: normal; }
ul { list-style: none; }
.sprite { position: absolute; }

input[type="text"] {
    height: 19px;
    min-width: 0;
    padding: 0 5px;
    border: 0;
    border-radius: 2px;
    background: #2b2b2b;
    font-size: 12px;
}

/* title */
.titlebar {
    display: flex;
    align-items: center;
    height: 23px;
    flex: none;
    padding-left: 3px;
    background: #fff;
    color: #000;
}
.titlebar h1 { flex: 1; margin-left: 6px; font-family: "Noto Sans", sans-serif; font-size: 11px; }
.app-icon { width: 14px; height: 14px; }
.win-buttons { display: flex; padding-right: 2px; }
.win-buttons button { width: 46px; height: 20px; }
.win-buttons svg { width: 12px; height: 12px; }

/* menus */
.menu { display: flex; gap: 12px; }
.menubar { display: flex; height: 26px; flex: none; padding: 0 2px 0 9px; }
.menubar .menu { flex: 1; height: 22px; gap: 14px; }
.workspace { display: flex; align-items: center; gap: 5px; }
.menubar .tool { margin-left: 2px; }

.select { position: relative; display: inline-block; height: 20px; }
.select select {
    width: 100%;
    height: 20px;
    padding: 0 22px 0 3px;
    border: 0;
    border-radius: 2px;
    background: #5d5d5d;
    appearance: none;
}
.latin select { font-size: 12px; }
.select::after {
    content: "";
    position: absolute;
    right: 5px;
    top: 8px;
    border: 5px solid transparent;
    border-top-color: #ccc;
    border-bottom: 0;
}
.select::before {
    content: "";
    position: absolute;
    right: 19px;
    top: 0;
    width: 1px;
    height: 20px;
    background: #484848;
}
.w-workspace { width: 220px; }
.w-mode { width: 98px; }
.w-layer { width: 119px; }
.w-renderer { width: 153px; }
.w-cam { width: 185px; }
.w-unit { width: 81px; }
.w-dpi { width: 113px; }
.w-fps { width: 104px; }

/* toolbars */
.tool { width: 23px; height: 23px; display: flex; align-items: center; justify-content: center; flex: none; }
.tool svg { width: 18px; height: 18px; }
.tool.big svg { width: 23px; height: 23px; }
.on { background: #5285a6; }
.flip svg { transform: scaleX(-1); }

.grip {
    width: 7px;
    margin: 2px 5px 2px 2px;
    flex: none;
    align-self: stretch;
    background: radial-gradient(circle at 1px 1px, #888 0 1px, transparent 1px) 0 0 / 4px 4px;
}
.sep, .chev { position: relative; width: 23px; height: 20px; flex: none; }
.sep { background: linear-gradient(#8a8a8a, #8a8a8a) center / 1px 20px no-repeat, linear-gradient(#8a8a8a, #8a8a8a) center / 3px 12px no-repeat; }
.chev { background: linear-gradient(#6a6a6a, #6a6a6a) 9px 0 / 1px 20px no-repeat; }
.chev::after { content: ""; position: absolute; left: 10px; top: 6px; border: 4px solid transparent; border-left-color: #8a8a8a; border-right: 0; }
.tri { width: 16px; flex: none; }
.tri::after { content: ""; display: block; width: 0; margin: auto; border: 4px solid transparent; border-top: 5px solid #999; border-bottom: 0; }

.up, .down, .left, .right { border: 5px solid transparent; width: 0; height: 0; flex: none; }
.up { border-bottom-color: #c4c4c4; border-top: 0; }
.down { border-top-color: #c4c4c4; border-bottom: 0; }
.left { border-right-color: #c4c4c4; border-left: 0; }
.right { border-left-color: #c4c4c4; border-right: 0; }

.readout {
    width: 100px;
    height: 22px;
    padding: 0 4px;
    border: 1px solid #525252;
    border-radius: 3px;
    text-align: left;
    font-size: 10px;
}

.status { display: flex; align-items: center; height: 28px; flex: none; padding-right: 3px; }
.user {
    display: flex;
    align-items: center;
    gap: 5px;
    width: 120px;
    height: 22px;
    padding-left: 5px;
    background: #5d5d5d;
    color: #eee;
    font-weight: bold;
}
.user svg { width: 16px; height: 16px; }
.user .tri { margin-left: auto; }
.user .tri::after { border-top-color: #bbb; }
.status-right { display: flex; margin-left: auto; }

/* shelf */
.shelf {
    display: flex;
    height: 72px;
    flex: none;
    border-top: 3px solid #373737;
    border-bottom: 2px solid #373737;
}
.shelf-side {
    display: flex;
    flex-direction: column;
    align-items: center;
    width: 20px;
    margin: 2px 4px 3px 0;
    padding: 12px 0;
    justify-content: space-between;
    background: #373737;
}
.bars { width: 10px; height: 5px; border: solid #aaa; border-width: 2px 0; background: #666; }
.shelf-side svg { width: 12px; height: 12px; color: #aaa; }
.shelf-main { flex: 1; min-width: 0; padding-top: 2px; }
.shelf-tabs { display: flex; gap: 1px; height: 18px; padding: 2px 2px 0; margin-right: 3px; background: #373737; }
.shelf-tabs button {
    padding: 0 9px;
    border: 1px solid #2b2b2b;
    border-bottom: 0;
    border-radius: 3px 3px 0 0;
    color: #8f8f8f;
    line-height: 14px;
}
.shelf-tabs .active { border-color: #444; background: #444; color: #eee; }
.shelf-items { display: flex; align-items: center; height: 42px; padding: 0 8px 0 6px; color: #eee; }
.shelf-items button { display: flex; align-items: center; gap: 5px; margin-right: 3px; }
.shelf-items svg { width: 30px; height: 26px; flex: none; }
.shelf-items .long span { width: 120px; overflow: hidden; text-align: left; }
.bar { width: 2px; height: 34px; margin: 0 7px 0 4px; flex: none; background: #999; }
.shelf-scroll { display: flex; flex-direction: column; align-items: center; justify-content: space-between; width: 12px; height: 34px; margin-left: auto; padding: 3px 0; background: #373737; }
.dot { width: 10px; height: 9px; border-radius: 5px; background: #5d5d5d; }

/* work area */
.workarea { display: flex; gap: 2px; flex: 1; min-height: 0; background: #373737; }
.toolbox { display: flex; flex-direction: column; align-items: center; width: 44px; flex: none; background: #444; }
.toolbox button { width: 36px; height: 36px; margin-bottom: 1px; }
.toolbox svg { width: 36px; height: 36px; display: block; }
.hgrip { width: 38px; height: 5px; margin: 3px 0 4px; background: radial-gradient(circle at 1px 1px, #888 0 1px, transparent 1px) 0 0 / 4px 4px; }
.layouts { display: flex; flex-direction: column; margin-top: 77px; padding-top: 6px; border-top: 2px solid #999; }
.toolbox .logo { width: 32px; height: 30px; margin-top: auto; margin-bottom: 7px; }

.panel { display: flex; flex-direction: column; flex: none; background: #444; }
.tabbar { height: 18px; flex: none; padding: 2px 2px 0; background: #373737; }
.tab { width: fit-content; height: 16px; padding: 0 10px; border-radius: 2px 2px 0 0; background: #444; color: #eee; }

.outliner { width: 265px; }
.outliner .menu { height: 24px; padding-left: 11px; }
.search { display: flex; align-items: center; gap: 7px; height: 25px; padding: 0 5px 0 8px; }
.search svg { width: 16px; height: 16px; }
.searchbox { position: relative; display: flex; flex: 1; }
.searchbox input[type="text"] { flex: 1; padding: 0 3px; font-size: 11px; }
.searchbox::after { content: ""; position: absolute; right: 4px; top: 7px; border: 5px solid transparent; border-top-color: #ddd; border-bottom: 0; }
.searchbox input::placeholder { color: #7d7d7d; }
.tree { display: flex; flex: 1; margin: 0 4px; background: #373737; }
.tree ul { flex: 1; font-size: 12px; }
.tree li { display: flex; align-items: center; gap: 3px; height: 20px; padding-left: 35px; }
.tree li svg { width: 16px; height: 16px; }
.tree .dim { color: #6b6b6b; }
.vscroll { display: flex; flex-direction: column; align-items: center; width: 10px; padding: 3px 0; gap: 5px; flex: none; }
.vscroll b { flex: 1; width: 10px; border-radius: 4px; background: #5d5d5d; }
.hscroll { display: flex; align-items: center; gap: 4px; height: 15px; margin: 0 4px; padding: 0 14px 0 3px; background: #373737; }
.hscroll b { flex: 1; height: 10px; border-radius: 5px; background: #5d5d5d; }
.hdots { width: 86px; height: 2px; margin: 1px auto 6px; border-top: 1px dotted #999; }

.rsetup { width: 331px; }
.rsetup .menu { height: 36px; padding: 5px 0 0 19px; }
.scene { display: flex; flex-direction: column; gap: 2px; margin: 0 11px; padding: 1px 1px 3px; border: 1px solid #2b2b2b; }
.scene > div { display: flex; align-items: center; height: 28px; background: #525252; box-shadow: 0 2px #2b2b2b; }
.scene .scene-head { padding: 0 3px 0 17px; background: #5d5d5d; }
.toggles { display: flex; gap: 4px; margin-left: auto; padding: 2px 4px; background: #3c3c3c; }
.toggles button { width: 20px; height: 20px; background: #5285a6; }
.toggles svg { width: 20px; height: 20px; display: block; }
.scene-row .grip { margin: 3px 0 3px 6px; }
.scene-row .name { width: 130px; margin-left: 15px; }
.scene-row button { margin-left: auto; margin-right: 9px; }
.scene-row svg { width: 17px; height: 17px; display: block; color: #b5b5b5; }
.layer-tools { display: flex; gap: 6px; height: 40px; align-items: center; padding: 8px 16px 0; }
.layer-tools svg { width: 20px; height: 20px; display: block; }
.layer-tools .push { margin-left: auto; }
.layer-list {
    display: flex;
    flex-direction: column;
    align-items: center;
    justify-content: center;
    flex: 1;
    margin: 0 11px 11px;
    padding-top: 8px;
    border: 1px solid #2b2b2b;
    outline: 1px solid #505050;
    outline-offset: -2px;
    background: #2b2b2b;
    color: #999;
}
.layer-list svg { width: 54px; height: 58px; margin-bottom: 3px; }

.props { width: 349px; }
.props-body { flex: 1; margin: 1px 2px; border: 1px solid #2b2b2b; border-radius: 3px; }

.viewport { flex: 1; min-width: 0; padding: 3px 3px 3px 4px; }
.view-frame { display: flex; flex-direction: column; flex: 1; min-height: 0; padding: 0 2px 2px; border: 1px solid #888; }
.view-frame .menu { height: 19px; padding-left: 5px; }
.view-tools { display: flex; align-items: center; height: 23px; flex: none; overflow: hidden; }
.view-tools button { width: 19px; height: 18px; flex: none; }
.view-tools svg { width: 16px; height: 16px; display: block; margin: auto; }
.view-tools .sep { width: 8px; height: 14px; background-size: 1px 14px, 3px 8px; }
.view-tools .sep ~ .sep { width: 10px; }
.canvas { position: relative; flex: 1; min-height: 0; overflow: hidden; background: #5c5c5c; }
.scene3d { position: absolute; inset: 0; }
.cam-name { position: absolute; left: 0; right: 22px; bottom: 6px; text-align: center; color: #fff; font-size: 10px; font-weight: bold; }

/* render settings */
.rsettings { position: relative; width: 468px; }
.rsettings .menu { height: 22px; padding-left: 11px; }
.pick { display: flex; align-items: center; gap: 1px; height: 20px; margin: 4px 6px 3px; }
.tabs2 { display: flex; gap: 2px; height: 18px; margin: 7px 4px 0; padding: 2px 2px 0; background: #373737; }
.tabs2 button { padding: 0 10px; border: 1px solid #2b2b2b; border-bottom: 0; border-radius: 2px 2px 0 0; color: #8f8f8f; line-height: 14px; }
.tabs2 .active { border-color: #444; background: #444; color: #eee; }
.settings-body { display: flex; flex-direction: column; flex: 1; min-height: 0; margin: 0 4px; padding: 8px 1px 1px 5px; border: 1px solid #2b2b2b; border-top: 0; }
.info { padding: 0 0 6px 4px; font-size: 12px; line-height: 14px; font-weight: bold; white-space: nowrap; }
.scroller { display: flex; flex: 1; min-height: 0; overflow: hidden; }
.form { width: 389px; margin-right: auto; margin-left: -2px; }
.scroller .vscroll { width: 12px; background: #373737; }
.low b { margin-top: 225px; margin-bottom: 51px; }

.group { margin: 0 2px; background: #494949; }
.group.first { margin-top: -13px; padding-bottom: 1px; }
.off { color: #7c7c7c; }
.off input[type="text"] { background: #404040; }
.row { display: flex; align-items: center; gap: 9px; margin-bottom: 4px; }
.row > :first-child { width: 143px; text-align: right; flex: none; white-space: nowrap; }
.row input[type="text"] { width: 68px; }
.row.check { height: 17px; }
.row.check label { margin-left: -4px; }
.row .select { height: 20px; }
.group hr { height: 1px; margin: 0 2px; border: 0; background: #414141; }
.group hr.thick { height: 4px; }
.form h3 {
    display: flex;
    align-items: center;
    height: 22px;
    margin-bottom: 3px;
    padding-left: 8px;
    gap: 15px;
    border-radius: 2px;
    background: #5d5d5d;
    color: #d5d5d5;
    font-weight: bold;
}
.form h3 .down { border-width: 6px 6px 0; border-top-color: #eee; }
.cams { padding: 4px 0 7px; }
.cams + .cams { margin-top: -4px; }
.cams .row > :first-child { width: 149px; }
.row.two { height: 30px; margin-bottom: 2px; line-height: 15px; gap: 7px; }
.trash { margin-left: 4px; }
.trash svg { width: 17px; height: 17px; display: block; }

input[type="checkbox"], input[type="radio"] {
    position: relative;
    width: 13px;
    height: 13px;
    margin: 0;
    flex: none;
    border-radius: 1px;
    background: #2b2b2b;
    appearance: none;
}
input[type="checkbox"]:checked::after {
    content: "";
    position: absolute;
    left: 4px;
    top: 1px;
    width: 5px;
    height: 9px;
    border: solid #eee;
    border-width: 0 2px 2px 0;
    transform: rotate(40deg);
}
input[type="radio"] { width: 9px; height: 9px; border-radius: 5px; }
input[type="radio"]:checked { border: 2px solid #2b2b2b; background: #ddd; }

.close { height: 27px; margin: 7px 8px 7px; flex: none; background: #5d5d5d; color: #eee; }

/* annotation drawn over the dock */
.marker { position: absolute; left: -14px; top: 300px; width: 437px; height: 227px; border: 5px solid #fff200; }

.sidetabs { display: flex; flex-direction: column; gap: 3px; width: 17px; flex: none; padding-top: 2px; }
.sidetabs button {
    display: flex;
    align-items: center;
    justify-content: center;
    width: 17px;
    flex: none;
    border: 1px solid #2b2b2b;
    border-left: 0;
    border-radius: 0 3px 3px 0;
    color: #999;
    font-size: 10px;
    writing-mode: vertical-rl;
    text-orientation: sideways;
    line-height: 15px;
    transform: rotate(180deg);
}
.sidetabs .s1 { height: 167px; }
.sidetabs .s2 { height: 124px; }
.sidetabs .s3 { height: 117px; }

/* bottom rows */
.timeline, .range, .command, .helpline { display: flex; align-items: center; flex: none; border-top: 2px solid #373737; }
.timeline { height: 42px; padding-right: 10px; }
.ticks { position: relative; flex: 1; height: 32px; margin-left: -1px; overflow: hidden; background: #2b2b2b; border-bottom: 2px solid #333; color: #808080; }
.ticks span { position: absolute; top: 0; height: 28px; padding-left: 3px; line-height: 12px; background: linear-gradient(#8a8a8a, #8a8a8a) 0 100% / 2px 13px no-repeat; }
.current { position: absolute; left: 9px; top: 0; width: 11px; height: 32px; padding: 10px 2px; background: #5d5d5d; color: #fff; font-size: 12px; font-weight: normal; }
.timeline input[type="text"] { width: 88px; margin: 0 7px; }
.playback { display: flex; }

.range { height: 37px; gap: 8px; padding-right: 10px; }
.range .grip { margin-right: -3px; }
.range input[type="text"] { width: 88px; height: 25px; }
.track { flex: 1; height: 25px; padding: 2px 5px; background: #373737; }
.thumb { display: flex; align-items: center; gap: 4px; width: 61%; height: 21px; padding: 0 3px; border-radius: 4px; background: #5d5d5d; font-size: 12px; }
.thumb b { width: 15px; height: 14px; border-radius: 4px; background: #929292; }
.thumb span { margin-left: auto; }
.range .sep { width: 3px; margin: 0 -2px; }
.range .tri { width: 12px; }
.range .readout { width: 120px; height: 25px; }
.range .readout.wide { width: 143px; }
.range .w-fps { margin-left: 7px; }
.range-tools { display: flex; align-items: center; gap: 6px; }
.range-tools .sep { margin: 0 4px; }

.command { height: 34px; }
.command label { width: 45px; padding-left: 9px; color: #eee; font-size: 12px; }
.command input[type="text"] { width: 782px; height: 22px; }
.splitter { width: 8px; }
.command output { flex: 1; height: 24px; background: #2b2b2b; }
.command .tool { margin: 0 6px 0 4px; }
.helpline { height: 24px; padding-top: 3px; }
.helpline .grip { margin-right: 15px; }
.taskbar { height: 2px; flex: none; padding-left: 48px; background: #2b2b2b; }
.taskbar b { display: block; width: 344px; height: 2px; background: #fff; }
```
FILE: app.js
```js
// perspective ground grid
const corners = [[114, 364], [384, 362], [710, 502], [-36, 515]];
const cells = 24;

function project(u, v) {
    const [[x0, y0], [x1, y1], [x2, y2], [x3, y3]] = corners;
    const sx = x0 - x1 + x2 - x3, sy = y0 - y1 + y2 - y3;
    const dx1 = x1 - x2, dy1 = y1 - y2, dx2 = x3 - x2, dy2 = y3 - y2;
    const den = dx1 * dy2 - dx2 * dy1;
    const g = (sx * dy2 - dx2 * sy) / den;
    const h = (dx1 * sy - sx * dy1) / den;
    const w = g * u + h * v + 1;
    return [
        ((x1 - x0 + g * x1) * u + (x3 - x0 + h * x3) * v + x0) / w,
        ((y1 - y0 + g * y1) * u + (y3 - y0 + h * y3) * v + y0) / w
    ];
}

function addLine(a, b, width) {
    const line = document.createElementNS('http://www.w3.org/2000/svg', 'path');
    line.setAttribute('d', `M${a.join(' ')}L${b.join(' ')}`);
    line.setAttribute('stroke-width', width);
    document.getElementById('grid').appendChild(line);
}

for (let i = 0; i <= cells; i++) {
    const t = i / cells;
    const width = i === cells / 2 ? 2 : 1;
    addLine(project(t, 0), project(t, 1), width);
    addLine(project(0, t), project(1, t), width);
}

// time slider
const ticks = document.getElementById('ticks');
for (let f = 5; f <= 120; f += 5) {
    const tick = document.createElement('span');
    tick.textContent = f;
    tick.style.left = (f * 0.826 - 0.4) + '%';
    ticks.appendChild(tick);
}
```
